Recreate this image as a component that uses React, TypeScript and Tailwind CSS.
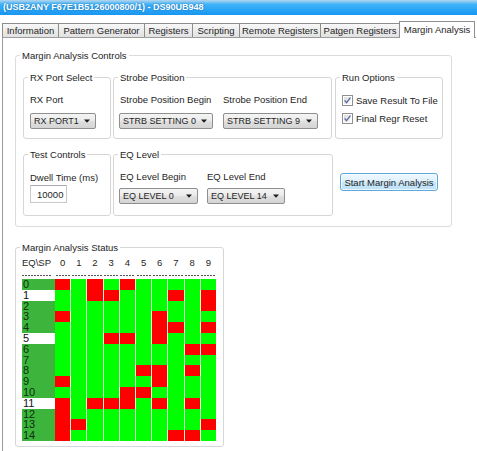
import React from "react";

const REDS: number[][] = [
  [0, 2, 4],
  [2, 3, 7, 9],
  [9],
  [0, 6],
  [6, 7, 9],
  [3, 4, 6],
  [8, 9],
  [],
  [5, 6, 8],
  [0, 6],
  [4, 5],
  [0, 2, 3, 4, 6, 8],
  [0],
  [0, 1, 9],
  [0, 7, 8],
];
const WHITE_ROWS = [1, 5, 11];
const COLS = [0, 1, 2, 3, 4, 5, 6, 7, 8, 9];

function Group({
  legend,
  className,
  children,
}: {
  legend: string;
  className: string;
  children: React.ReactNode;
}) {
  return (
    <fieldset className={`rounded-[3px] border border-[#d6d6d6] ${className}`}>
      <legend className="ml-[4px] px-[2px] leading-[11px]">{legend}</legend>
      {children}
    </fieldset>
  );
}

function Select({ value, className }: { value: string; className: string }) {
  return (
    <div
      className={`flex h-[16px] items-center justify-between rounded-[2px] border border-[#8e8f8f] bg-[linear-gradient(to_bottom,#f4f4f4_0%,#ececec_45%,#e0e0e0_50%,#d4d4d4_100%)] pl-[3px] pr-[5px] text-[9px] ${className}`}
    >
      <span>{value}</span>
      <svg width="6" height="4" viewBox="0 0 6 4">
        <path d="M0 0.5h6L3 3.8z" fill="#1a1a1a" />
      </svg>
    </div>
  );
}

function Check({ label }: { label: string }) {
  return (
    <div className="flex h-[14px] items-center gap-[3px]">
      <svg width="11" height="11" viewBox="0 0 11 11">
        <defs>
          <linearGradient id="cbg" x1="0" y1="0" x2="1" y2="1">
            <stop offset="0" stopColor="#dcdcdc" />
            <stop offset="1" stopColor="#fbfbfb" />
          </linearGradient>
        </defs>
        <rect x="0.5" y="0.5" width="10" height="10" fill="#fff" stroke="#8e8f8f" />
        <rect x="2" y="2" width="7" height="7" fill="url(#cbg)" />
        <path d="M2.6 5.4 L4.5 7.6 L8.4 2.6" fill="none" stroke="#5a6fa3" strokeWidth="1.4" />
      </svg>
      <span>{label}</span>
    </div>
  );
}

const TABS: { label: string; w: string }[] = [
  { label: "Information", w: "w-[57px] border-l" },
  { label: "Pattern Generator", w: "w-[86px]" },
  { label: "Registers", w: "w-[48px]" },
  { label: "Scripting", w: "w-[47px]" },
  { label: "Remote Registers", w: "w-[81px]" },
  { label: "Patgen Registers", w: "w-[79px]" },
];

export default function App() {
  return (
    <div className="h-[451px] w-[477px] overflow-hidden bg-white font-['Liberation_Sans',Arial,sans-serif] text-[9.5px] leading-[11px] text-[#1e1e1e]">
      {/* title bar */}
      <div className="flex h-[15px] items-center bg-[linear-gradient(to_bottom,#b3d5ee_0%,#3db3fa_30%,#1896f0_100%)] pl-[3px] text-[9px] font-bold text-white [text-shadow:0_0_2px_rgba(0,60,120,0.6)]">
        (USB2ANY F67E1B5126000800/1) - DS90UB948
      </div>

      {/* tabs */}
      <div className="flex h-[22px] items-end pl-[2px]">
        {TABS.map((t) => (
          <div
            key={t.label}
            className={`flex h-[14px] items-center justify-center border-r border-t border-[#8d8d8d] bg-[linear-gradient(to_bottom,#f8f8f8_0%,#ececec_50%,#e2e2e2_100%)] ${t.w}`}
          >
            {t.label}
          </div>
        ))}
        <div className="relative z-10 -mb-px -ml-px flex h-[17px] w-[76px] items-center justify-center border-l border-r border-t border-[#8d8d8d] bg-white pb-[2px]">
          Margin Analysis
        </div>
      </div>

      {/* tab panel */}
      <div className="ml-[2px] h-[414px] w-[474px] border-l border-t border-[#9c9c9c] pl-[12px] pt-[12px]">
        <Group legend="Margin Analysis Controls" className="w-[437px] border-[#dcdcdc]">
          <div className="px-[7px] pb-[10px] pt-[11px]">
            {/* row 1 */}
            <div className="flex items-stretch">
              <Group legend="RX Port Select" className="w-[88px]">
                <div className="pb-[9px] pl-[6px] pt-[11px]">
                  <div>RX Port</div>
                  <Select value="RX PORT1" className="mt-[8px] w-[66px]" />
                </div>
              </Group>
              <Group legend="Strobe Position" className="ml-[2px] w-[219px]">
                <div className="flex pb-[9px] pl-[5px] pt-[11px]">
                  <div className="w-[94px]">
                    <div className="pl-[1px]">Strobe Position Begin</div>
                    <Select value="STRB SETTING 0" className="mt-[8px] w-[94px]" />
                  </div>
                  <div className="ml-[10px] w-[95px]">
                    <div>Strobe Position End</div>
                    <Select value="STRB SETTING 9" className="mt-[8px] w-[95px]" />
                  </div>
                </div>
              </Group>
              <Group legend="Run Options" className="ml-[3px] w-[108px]">
                <div className="flex flex-col gap-[4px] pl-[6px] pt-[10px]">
                  <Check label="Save Result To File" />
                  <Check label="Final Regr Reset" />
                </div>
              </Group>
            </div>

            {/* row 2 */}
            <div className="mt-[9.5px] flex items-stretch">
              <Group legend="Test Controls" className="w-[88px]">
                <div className="pl-[6px] pt-[12px]">
                  <div>Dwell Time (ms)</div>
                  <div className="mt-[2.5px] flex h-[18px] w-[37px] items-center border border-[#c9c9c9] border-t-[#a9abb2] bg-white pl-[6px]">
                    10000
                  </div>
                </div>
              </Group>
              <Group legend="EQ Level" className="ml-[2px] w-[220px]">
                <div className="flex pb-[11px] pl-[5px] pt-[11px]">
                  <div className="w-[79px]">
                    <div className="pl-[1px]">EQ Level Begin</div>
                    <Select value="EQ LEVEL 0" className="mt-[6.5px] w-[79px]" />
                  </div>
                  <div className="ml-[9px] w-[78px]">
                    <div>EQ Level End</div>
                    <Select value="EQ LEVEL 14" className="mt-[6.5px] w-[78px]" />
                  </div>
                </div>
              </Group>
              <div className="ml-[7px] flex items-center">
                <div className="flex h-[18px] w-[98px] items-center justify-center rounded-[3px] border border-[#5ea9dc] bg-[linear-gradient(to_bottom,#eef8fe_0%,#ddf0fc_50%,#c9e7fa_51%,#bfe1f7_100%)] shadow-[inset_0_0_0_1px_rgba(255,255,255,0.7)]">
                  Start Margin Analysis
                </div>
              </div>
            </div>
          </div>
        </Group>

        <Group legend="Margin Analysis Status" className="mt-[14.5px] w-[209px]">
          <div className="px-[6px] pb-[5px] pt-[4.5px]">
            {/* header */}
            <div className="flex h-[11px]">
              <div className="w-[33px]">{"EQ\\SP"}</div>
              <div className="flex gap-px">
                {COLS.map((c) => (
                  <div key={c} className="w-[15.2px] text-center">
                    {c}
                  </div>
                ))}
              </div>
            </div>
            {/* dashes */}
            <div className="mt-[7px] flex h-[1px]">
              <div className="w-[33px]">
                <div className="h-[1px] w-[29px] bg-[repeating-linear-gradient(90deg,#555_0_2px,transparent_2px_3px)]" />
              </div>
              <div className="flex gap-px">
                {COLS.map((c) => (
                  <div key={c} className="flex w-[15.2px] justify-center">
                    <div className="h-[1px] w-[14px] bg-[repeating-linear-gradient(90deg,#555_0_2px,transparent_2px_3px)]" />
                  </div>
                ))}
              </div>
            </div>
            {/* grid */}
            <div className="mt-[3px]">
              {REDS.map((reds, r) => (
                <div key={r} className="flex h-[10.8px]">
                  <div
                    className={`w-[33px] pl-[1px] text-[11px] leading-[10.8px] ${
                      WHITE_ROWS.includes(r) ? "bg-white text-[#111111]" : "bg-[#3db53d] text-[#0c2f0c]"
                    }`}
                  >
                    {r}
                  </div>
                  <div className="flex gap-px bg-[#d4f5d4]">
                    {COLS.map((c) => (
                      <div
                        key={c}
                        className={`w-[15.2px] ${reds.includes(c) ? "bg-[#ff0000]" : "bg-[#00ff00]"}`}
                      />
                    ))}
                  </div>
                </div>
              ))}
            </div>
          </div>
        </Group>
      </div>
    </div>
  );
}
